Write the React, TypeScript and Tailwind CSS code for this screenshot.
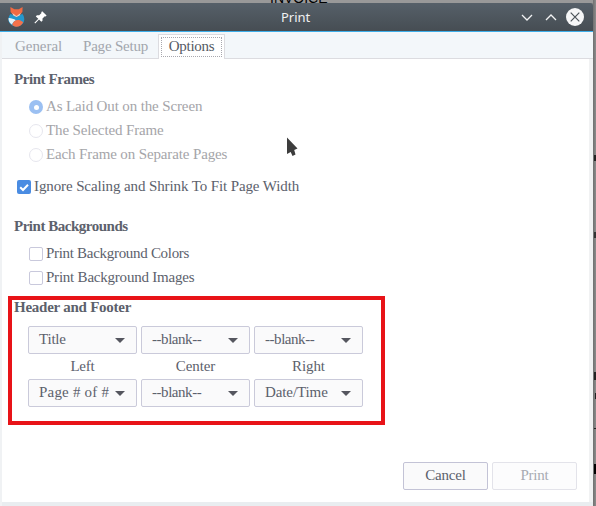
import React from "react";

function FoxLogo() {
  return (
    <svg width="17" height="20" viewBox="0 0 17 20" className="block shrink-0">
      <path d="M2.5 7 C-1.5 12 0 18.5 8.5 19.5 C16.5 18.5 18 12 14.5 7 L8.5 9 Z" fill="#2497cd" />
      <path d="M2.4 0 L6.4 2.2 L10.8 2.2 L14.6 0 L14.4 5 L12.2 7.4 L8.5 9 L4.8 7.4 L2.6 5 Z" fill="#f26a42" />
      <path d="M4.2 6 L8.5 9 L12.8 6 L11.6 8.6 L8.5 10 L5.4 8.6 Z" fill="#f8d0c0" />
      <path d="M0.6 11 C3 10.8 5.5 11.8 8 13.2 C6 14.2 4.8 15.6 4 17.6 C1.5 16.2 0.3 13.8 0.6 11Z" fill="#e4f1f7" />
      <path d="M4.2 17.7 C5.5 13 10.5 11.5 15.2 15.2 C13.6 18.6 10.5 20 8 19.7 C6.4 19.4 5 18.8 4.2 17.7Z" fill="#f4714a" />
    </svg>
  );
}

function PinIcon() {
  return (
    <svg width="13" height="13" viewBox="0 0 13 13" className="block">
      <path d="M8.2 0.2 L12.6 4.6 L11.6 5.5 L10.8 5.2 L8.5 7.5 L8.5 9.8 L7.3 10.8 L5 8.5 L1.2 12.6 L0.4 11.8 L4.3 7.8 L1.8 5.4 L2.9 4.2 L5.2 4.3 L7.5 2 L7.2 1.2 Z" fill="#fff" />
    </svg>
  );
}

function Radio({ label, checked }: { label: string; checked?: boolean }) {
  return (
    <div className="flex h-6 items-center gap-[3px] text-[#a5a5a9]">
      <span
        className={
          checked
            ? "flex size-[14px] items-center justify-center rounded-full bg-[#9bc0f2]"
            : "size-[14px] rounded-full border border-[#e6e6ee] bg-white"
        }
      >
        {checked && <span className="size-[5px] rounded-full bg-white" />}
      </span>
      <span className="pb-[2px] tracking-[-0.13px]">{label}</span>
    </div>
  );
}

function Check({ label, checked, text }: { label: string; checked?: boolean; text: string }) {
  return (
    <div className="flex h-6 items-center gap-[3px]">
      <span
        className={
          checked
            ? "flex size-[14px] items-center justify-center rounded-[2px] bg-[#4a8ce2]"
            : "size-[14px] rounded-[2px] border border-[#c9c9dc] bg-white"
        }
      >
        {checked && (
          <svg width="10" height="9" viewBox="0 0 10 9">
            <path d="M1.2 4.2 L4 7 L9 1.8" fill="none" stroke="#fff" strokeWidth="2" />
          </svg>
        )}
      </span>
      <span className={text}>{label}</span>
    </div>
  );
}

function Select({ value, text }: { value: string; text: string }) {
  return (
    <div className="flex h-7 w-[109px] items-center justify-between rounded-[2px] border border-[#cacada] bg-[#fafafb] pr-[11px] pl-[10px]">
      <span className={text}>{value}</span>
      <svg width="10" height="5" viewBox="0 0 10 5">
        <path d="M0 0 H10 L5 5 Z" fill="#55565f" />
      </svg>
    </div>
  );
}

export default function App() {
  return (
    <div className="relative flex h-[506px] w-[596px] overflow-hidden bg-[#858585] font-['Liberation_Serif',serif] text-[15px] leading-[18px] whitespace-nowrap text-[#5c616c]">
      <div className="flex w-[593px] flex-col">
        <div className="h-[3px] shrink-0 overflow-hidden bg-[#999]">
          <div className="-mt-[9px] ml-[270px] font-['Liberation_Sans',sans-serif] text-[14px] leading-[14px] text-black">INVOICE</div>
        </div>
        <header className="flex h-7 shrink-0 items-center rounded-tr-[3px] bg-linear-to-b from-[#566069] to-[#464d53] pr-[9px] pl-2">
          <FoxLogo />
          <div className="ml-[9px]"><PinIcon /></div>
          <h1 className="ml-[234px] flex-1 font-['Noto_Sans',sans-serif] text-[13px] text-[#f0f1f2]">Print</h1>
          <div className="flex items-center gap-[12px]">
            <svg width="12" height="7" viewBox="0 0 12 7"><path d="M1 1 L6 6 L11 1" fill="none" stroke="#f2f3f4" strokeWidth="1.3" /></svg>
            <svg width="12" height="7" viewBox="0 0 12 7"><path d="M1 6 L6 1 L11 6" fill="none" stroke="#f2f3f4" strokeWidth="1.3" /></svg>
            <svg width="18" height="18" viewBox="0 0 18 18" className="-ml-[3px]">
              <circle cx="9" cy="9" r="9" fill="#f5f6f7" />
              <path d="M4.7 4.7 L13.3 13.3 M13.3 4.7 L4.7 13.3" stroke="#4b5359" strokeWidth="1.2" />
            </svg>
          </div>
        </header>
        <div className="h-px shrink-0 bg-[#3daee9]" />
        <div className="flex min-h-0 flex-1 flex-col border-l-2 border-[#f0f2f4] bg-white">
          <nav className="flex h-[27px] items-end border-b border-[#dcdce0] bg-[#f3f7fa] text-[#a2a6ad]">
            <span className="mb-[3px] ml-[13px] w-[68px] tracking-[-0.05px]">General</span>
            <span className="mb-[3px] w-[75px] tracking-[-0.2px]">Page Setup</span>
            <div className="-mb-px h-[25px] w-[67px] border border-b-0 border-[#dcdce0] bg-white p-[2px]">
              <div className="flex h-[20px] items-center justify-center border border-dotted border-[#a8a8ae] pb-[2px] tracking-[-0.3px] text-[#555a64]">Options</div>
            </div>
          </nav>
          <main className="flex flex-1 flex-col border-r-4 border-[#f1f2f3] pl-[6px]">
            <h2 className="mt-[11px] ml-[6px] h-[19px] font-bold tracking-[-0.43px]">Print Frames</h2>
            <div className="mt-[6px] ml-[21px]">
              <Radio label="As Laid Out on the Screen" checked />
              <Radio label="The Selected Frame" />
              <Radio label="Each Frame on Separate Pages" />
            </div>
            <div className="mt-[8px] ml-[9px]">
              <Check label="Ignore Scaling and Shrink To Fit Page Width" checked text="pb-[2px] tracking-[-0.11px]" />
            </div>
            <h2 className="mt-[18px] ml-[6px] h-[19px] font-bold tracking-[-0.48px]">Print Backgrounds</h2>
            <div className="mt-[6px] ml-[21px]">
              <Check label="Print Background Colors" text="pb-[2px] tracking-[-0.3px]" />
              <Check label="Print Background Images" text="pb-[2px] tracking-[-0.22px]" />
            </div>
            <section className="mt-[6px] h-[129px] w-[377px] border-4 border-[#e81318] pl-[2px]">
              <h2 className="-mt-[2px] h-[19px] font-bold tracking-[-0.25px]">Header and Footer</h2>
              <div className="mt-[9px] ml-[14px] grid w-[335px] grid-cols-3 gap-x-1">
                <Select value="Title" text="pb-[2px] tracking-[-0.2px]" />
                <Select value="--blank--" text="pb-[2px] tracking-[-0.45px]" />
                <Select value="--blank--" text="pb-[2px] tracking-[-0.45px]" />
                <span className="h-[25px] text-center leading-[25px] tracking-[-0.2px]">Left</span>
                <span className="h-[25px] text-center leading-[25px] tracking-[-0.1px]">Center</span>
                <span className="h-[25px] text-center leading-[25px] tracking-[-0.1px]">Right</span>
                <Select value="Page # of #" text="pb-[2px] tracking-[0.2px]" />
                <Select value="--blank--" text="pb-[2px] tracking-[-0.45px]" />
                <Select value="Date/Time" text="pb-[2px] tracking-[-0.1px]" />
              </div>
            </section>
            <footer className="mt-[37px] mr-[12px] flex justify-end gap-1">
              <button className="h-7 w-[85px] rounded-[2px] border border-[#c3c3d6] bg-[#fafafb] pb-[2px] tracking-[-0.2px]">Cancel</button>
              <button className="h-7 w-[85px] rounded-[2px] border border-[#e3e3ea] bg-[#fcfcfd] pb-[2px] tracking-[-0.2px] text-[#a8abb2]">Print</button>
            </footer>
          </main>
          <div className="h-1 bg-[#e9edf0]" />
        </div>
      </div>
      <div className="flex w-[3px] flex-col items-end overflow-hidden bg-linear-to-r from-[#707070] to-[#8c8c8c]">
        <div className="mt-[155px] h-[6px] w-[2px] bg-[#222]" />
        <div className="mt-[71px] h-[6px] w-[2px] bg-[#333]" />
        <div className="mt-[134px] h-[8px] w-[2px] bg-[#222]" />
        <div className="mt-[13px] h-[6px] w-px bg-[#222]" />
        <div className="mt-[29px] h-px w-[2px] bg-[#222]" />
        <div className="mt-[35px] h-[10px] w-[2px] bg-black" />
      </div>
      <svg width="12" height="20" viewBox="0 0 12 20" className="absolute top-[137px] left-[286px]">
        <path d="M1 0.5 L11.5 11.5 L8.2 13 L9.5 17.5 L6.5 19 L4.7 15 L1 17 Z" fill="#3d3d3d" />
      </svg>
    </div>
  );
}
